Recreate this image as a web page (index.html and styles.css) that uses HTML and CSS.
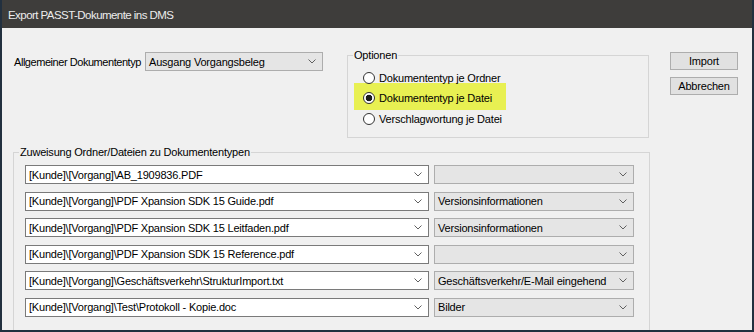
FILE: index.html
```html
<!DOCTYPE html>
<html>
<head>
  <meta charset="UTF-8">
  <title>Export PASST-Dokumente ins DMS</title>
  <link rel="stylesheet" href="styles.css">
</head>
<body>
  <div class="window">
    <div class="titlebar">Export PASST-Dokumente ins DMS</div>
    <div class="content">
      <div class="top">
        <div class="general">
          <span class="label">Allgemeiner Dokumententyp</span>
          <div class="combo combo-grey combo-general">
            <span>Ausgang Vorgangsbeleg</span>
            <svg class="chevron" width="8" height="5" viewBox="0 0 8 5"><polyline points="0.5,0.5 4,4 7.5,0.5"/></svg>
          </div>
        </div>
        <div class="group options">
          <div class="group-title">Optionen</div>
          <div class="radio-row first"><span class="radio"></span>Dokumententyp je Ordner</div>
          <div class="radio-row highlight"><span class="radio checked"></span>Dokumententyp je Datei</div>
          <div class="radio-row last"><span class="radio"></span>Verschlagwortung je Datei</div>
        </div>
        <div class="buttons">
          <button>Import</button>
          <button>Abbrechen</button>
        </div>
      </div>
      <div class="group assign">
        <div class="group-title">Zuweisung Ordner/Dateien zu Dokumententypen</div>
        <div class="rows">
          <div class="row">
            <div class="combo combo-white combo-path"><span>[Kunde]\[Vorgang]\AB_1909836.PDF</span><svg class="chevron" width="8" height="5" viewBox="0 0 8 5"><polyline points="0.5,0.5 4,4 7.5,0.5"/></svg></div>
            <div class="combo combo-grey combo-type"><span></span><svg class="chevron" width="8" height="5" viewBox="0 0 8 5"><polyline points="0.5,0.5 4,4 7.5,0.5"/></svg></div>
          </div>
          <div class="row">
            <div class="combo combo-white combo-path"><span>[Kunde]\[Vorgang]\PDF Xpansion SDK 15 Guide.pdf</span><svg class="chevron" width="8" height="5" viewBox="0 0 8 5"><polyline points="0.5,0.5 4,4 7.5,0.5"/></svg></div>
            <div class="combo combo-grey combo-type"><span>Versionsinformationen</span><svg class="chevron" width="8" height="5" viewBox="0 0 8 5"><polyline points="0.5,0.5 4,4 7.5,0.5"/></svg></div>
          </div>
          <div class="row">
            <div class="combo combo-white combo-path"><span>[Kunde]\[Vorgang]\PDF Xpansion SDK 15 Leitfaden.pdf</span><svg class="chevron" width="8" height="5" viewBox="0 0 8 5"><polyline points="0.5,0.5 4,4 7.5,0.5"/></svg></div>
            <div class="combo combo-grey combo-type"><span>Versionsinformationen</span><svg class="chevron" width="8" height="5" viewBox="0 0 8 5"><polyline points="0.5,0.5 4,4 7.5,0.5"/></svg></div>
          </div>
          <div class="row">
            <div class="combo combo-white combo-path"><span>[Kunde]\[Vorgang]\PDF Xpansion SDK 15 Reference.pdf</span><svg class="chevron" width="8" height="5" viewBox="0 0 8 5"><polyline points="0.5,0.5 4,4 7.5,0.5"/></svg></div>
            <div class="combo combo-grey combo-type"><span></span><svg class="chevron" width="8" height="5" viewBox="0 0 8 5"><polyline points="0.5,0.5 4,4 7.5,0.5"/></svg></div>
          </div>
          <div class="row">
            <div class="combo combo-white combo-path"><span>[Kunde]\[Vorgang]\Geschäftsverkehr\StrukturImport.txt</span><svg class="chevron" width="8" height="5" viewBox="0 0 8 5"><polyline points="0.5,0.5 4,4 7.5,0.5"/></svg></div>
            <div class="combo combo-grey combo-type"><span>Geschäftsverkehr/E-Mail eingehend</span><svg class="chevron" width="8" height="5" viewBox="0 0 8 5"><polyline points="0.5,0.5 4,4 7.5,0.5"/></svg></div>
          </div>
          <div class="row">
            <div class="combo combo-white combo-path"><span>[Kunde]\[Vorgang]\Test\Protokoll - Kopie.doc</span><svg class="chevron" width="8" height="5" viewBox="0 0 8 5"><polyline points="0.5,0.5 4,4 7.5,0.5"/></svg></div>
            <div class="combo combo-grey combo-type"><span>Bilder</span><svg class="chevron" width="8" height="5" viewBox="0 0 8 5"><polyline points="0.5,0.5 4,4 7.5,0.5"/></svg></div>
          </div>
        </div>
      </div>
    </div>
  </div>
</body>
</html>
```

FILE: styles.css
```css
body {
  margin: 0;
  font-family: "Liberation Sans", Arial, sans-serif;
  font-size: 11px;
  letter-spacing: -0.2px;
  color: #000;
  background: #f0f0f0;
}

.window {
  width: 754px;
  height: 332px;
  box-sizing: border-box;
  border: 2px solid #22303f;
  border-top: none;
  display: flex;
  flex-direction: column;
  overflow: hidden;
  background: #f0f0f0;
}

.titlebar {
  height: 28px;
  flex: none;
  background: #3e3d3b;
  color: #ececec;
  font-size: 11.5px;
  letter-spacing: -0.55px;
  line-height: 30px;
  padding-left: 6px;
}

.content {
  flex: 1;
  min-height: 0;
}

.top {
  display: flex;
  align-items: flex-start;
  padding: 24px 0 0 12px;
}

.general {
  width: 309px;
  display: flex;
  align-items: center;
  justify-content: space-between;
  white-space: nowrap;
}

.general .label {
  letter-spacing: -0.45px;
}

/* combo boxes */
.combo {
  height: 19px;
  box-sizing: border-box;
  display: flex;
  align-items: center;
  justify-content: space-between;
  padding: 0 6px 0 3px;
  white-space: nowrap;
}

.combo-grey {
  background: #e5e5e5;
  border: 1px solid #adadad;
}

.combo-white {
  background: #fff;
  border: 1px solid #7a7a7a;
}

.combo-general {
  width: 178px;
}

.combo-path {
  width: 404px;
}

.combo-type {
  width: 200px;
}

.chevron {
  flex: none;
}

.chevron polyline {
  fill: none;
  stroke: #606060;
  stroke-width: 1;
}

/* group boxes */
.group {
  box-sizing: border-box;
  border: 1px solid #d5d5d5;
  padding-left: 6px;
}

.group-title {
  display: table;
  margin: -8px 0 0 -1px;
  padding: 0 1px;
  line-height: 14px;
  background: #f0f0f0;
}

.options {
  width: 302px;
  height: 83px;
  margin: 3px 0 0 24px;
}

.radio-row {
  width: 152px;
  box-sizing: border-box;
  height: 20px;
  line-height: 20px;
  padding-left: 9px;
  white-space: nowrap;
  display: flex;
  align-items: center;
}

.radio-row.first {
  margin-top: 6px;
}

.radio-row.highlight {
  height: 27px;
  padding-top: 5px;
  padding-bottom: 2px;
  margin: -5px 0 -2px;
  background: #e8f052;
}

.radio-row.last {
  margin-top: 1px;
}

.radio {
  width: 12px;
  height: 12px;
  box-sizing: border-box;
  border: 1px solid #333;
  border-radius: 50%;
  background: #fff;
  margin-right: 4px;
  flex: none;
}

.radio.checked {
  background: radial-gradient(circle, #1a1a1a 0 3px, #fff 3.6px);
}

.buttons {
  display: flex;
  flex-direction: column;
  gap: 7px;
  margin-left: 21px;
}

.buttons button {
  width: 68px;
  height: 18px;
  padding: 0;
  font-family: inherit;
  font-size: 11px;
  letter-spacing: -0.2px;
  color: #000;
  background: #e1e1e1;
  border: 1px solid #adadad;
}

.assign {
  width: 637px;
  height: 200px;
  margin: 14px 0 0 11px;
}

.rows {
  display: flex;
  flex-direction: column;
  gap: 7.6px;
  margin: 6px 0 0 5px;
}

.row {
  display: flex;
  gap: 5px;
}
```
